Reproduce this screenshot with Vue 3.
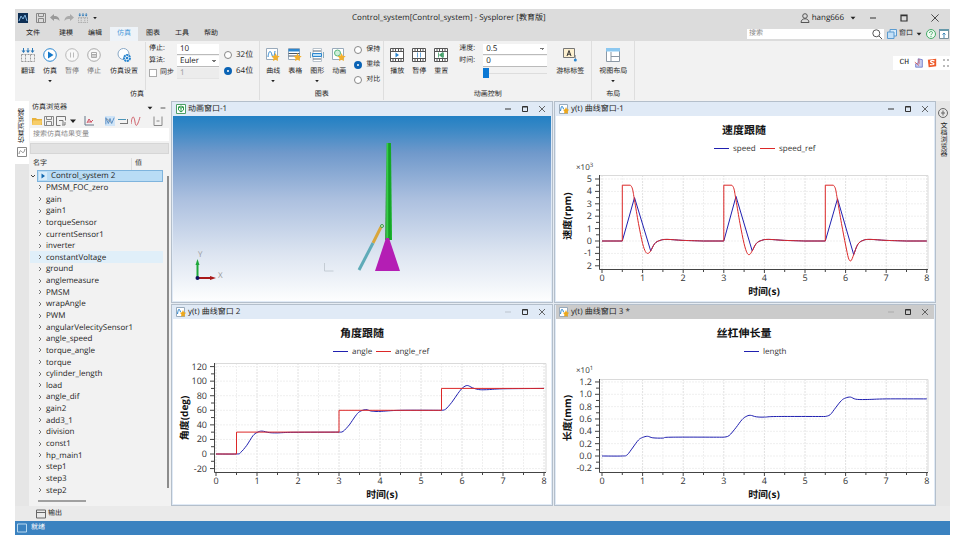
<script setup>
import { ref } from 'vue'

const tabs = ['文件', '建模', '编辑', '仿真', '图表', '工具', '帮助']
const simButtons = [
  { label: '翻译', icon: 'i-translate' },
  { label: '仿真', icon: 'i-play', caret: true },
  { label: '暂停', icon: 'i-pause', dim: true },
  { label: '停止', icon: 'i-stop', dim: true },
  { label: '仿真设置', icon: 'i-config', wide: true },
]
const chartButtons = [
  { label: '曲线', icon: 'i-curve', caret: true },
  { label: '表格', icon: 'i-table' },
  { label: '图形', icon: 'i-shape', caret: true },
  { label: '动画', icon: 'i-anim' },
]
const animButtons = [
  { label: '播放', icon: 'i-film-play' },
  { label: '暂停', icon: 'i-film-pause' },
  { label: '重置', icon: 'i-film-reset' },
]
const tools = ['i-folder', 'i-save', 'i-export', 'i-caret', 'i-axes', 'i-wave', 'i-lines', 'i-redwave', 'i-collapse']
const tree = [
  'PMSM_FOC_zero', 'gain', 'gain1', 'torqueSensor', 'currentSensor1', 'inverter', 'constantVoltage',
  'ground', 'anglemeasure', 'PMSM', 'wrapAngle', 'PWM', 'angularVelecitySensor1', 'angle_speed',
  'torque_angle', 'torque', 'cylinder_length', 'load', 'angle_dif', 'gain2', 'add3_1', 'division',
  'const1', 'hp_main1', 'step1', 'step3', 'step2',
]

const bits = ref('64')
const mode = ref('重绘')
const stopTime = ref('10')
const syncStep = ref('1')
const animTime = ref('0')

const BLUE = '#2020b0'
const RED = '#dc2828'

// Catmull-Rom spline through data points; "line" runs use straight segments.
function toPath(c, runs) {
  const px = ([x, y]) => [c.x0 + x * c.xu, c.y0 - y * c.yu]
  const f = (p) => p.map((v) => v.toFixed(1)).join(' ')
  let d = ''
  runs.forEach((run) => {
    const p = run.pts.map(px)
    d += (d ? 'L' : 'M') + f(p[0])
    for (let i = 1; i < p.length; i++) {
      if (run.line) {
        d += 'L' + f(p[i])
        continue
      }
      const a = p[i - 2] || p[i - 1]
      const b = p[i - 1]
      const e = p[i]
      const g = p[i + 1] || e
      d += 'C' + f([b[0] + (e[0] - a[0]) / 6, b[1] + (e[1] - a[1]) / 6]) + ' '
        + f([e[0] - (g[0] - b[0]) / 6, e[1] - (g[1] - b[1]) / 6]) + ' ' + f(e)
    }
  })
  return d
}

const pulses = [
  { t: 0.5, peak: 3.5, low: -0.8, ref: -1.0 },
  { t: 3, peak: 3.6, low: -0.8, ref: -1.1 },
  { t: 5.5, peak: 3.4, low: -1.1, ref: -1.6 },
]
const tail = (t, low) => [[t + 0.7, low], [t + 0.8, low * 0.25], [t + 0.93, 0.05], [t + 1.1, 0.13], [t + 1.5, 0.05], [t + 2, 0]]
const speed = [{ line: true, pts: [[0, 0]] }]
const speedRef = [{ line: true, pts: [[0, 0]] }]
pulses.forEach(({ t, peak, low, ref: r }) => {
  speed.push({ line: true, pts: [[t, 0], [t + 0.3, peak], [t + 0.7, low]] }, { pts: tail(t, low) })
  speedRef.push({ line: true, pts: [[t, 0], [t, 4.5], [t + 0.2, 4.5]] })
  speedRef.push({ pts: [[t + 0.2, 4.5], [t + 0.25, 4.2], [t + 0.3, 3.3], [t + 0.4, 1.4], [t + 0.5, r * 0.2], [t + 0.57, r * 0.85], [t + 0.63, r], ...tail(t, low)] })
})
speed.push({ line: true, pts: [[8, 0]] })
speedRef.push({ line: true, pts: [[8, 0]] })

const angle = [
  { pts: [[0, 0], [0.5, 0], [0.6, 2], [0.75, 12], [0.9, 25], [1, 29.5], [1.12, 31.5], [1.3, 29.4], [1.5, 29], [1.9, 29.8], [3, 30]] },
  { pts: [[3, 30], [3.1, 31], [3.25, 40], [3.4, 52], [3.5, 58], [3.65, 61], [3.8, 58.8], [4, 58.5], [4.5, 60], [5.5, 60]] },
  { pts: [[5.5, 60], [5.6, 61.5], [5.75, 71], [5.9, 83], [6.02, 91], [6.13, 94], [6.25, 91], [6.4, 88.5], [6.6, 88.3], [7, 89.5], [8, 90]] },
]
const angleRef = [{ line: true, pts: [[0, 0], [0.5, 0], [0.5, 30], [3, 30], [3, 60], [5.5, 60], [5.5, 90], [8, 90]] }]
const length = [
  { pts: [[0, 0], [0.5, 0], [0.62, 0.02], [0.75, 0.13], [0.9, 0.26], [1, 0.3], [1.12, 0.32], [1.25, 0.295], [1.5, 0.29], [1.7, 0.305], [3, 0.305]] },
  { pts: [[3, 0.305], [3.13, 0.33], [3.3, 0.46], [3.45, 0.59], [3.55, 0.64], [3.65, 0.66], [3.8, 0.635], [4, 0.63], [4.3, 0.64], [5.5, 0.64]] },
  { pts: [[5.5, 0.64], [5.62, 0.67], [5.75, 0.78], [5.9, 0.9], [6, 0.94], [6.12, 0.955], [6.25, 0.92], [6.5, 0.915], [7, 0.925], [8, 0.925]] },
]

function build(c) {
  return {
    ...c,
    lines: c.series.map((s) => ({ color: s.color, d: toPath(c, s.runs) })),
    yt: c.labels.map((text, i) => ({ text, y: c.y0 - (c.min + i * c.step) * c.yu })),
    xt: Array.from({ length: 17 }, (_, i) => ({ x: c.x0 + (i * c.xu) / 2, text: i % 2 ? '' : String(i / 2) })),
  }
}

const speedChart = build({
  title: '速度跟随', ylabel: '速度(rpm)', exp: '3', left: 43, right: 372, top: 59, bottom: 153,
  x0: 46, xu: 40.6, y0: 125, yu: 12.4, min: -2, step: 1, labels: ['2', '-1', '0', '1', '2', '3', '4', '5'],
  mid: 188, ymid: 100,
  legend: [{ x: 158, text: 'speed', color: BLUE }, { x: 204, text: 'speed_ref', color: RED }],
  series: [{ color: BLUE, runs: speed }, { color: RED, runs: speedRef }],
})
const angleChart = build({
  title: '角度跟随', ylabel: '角度(deg)', left: 41, right: 373, top: 44, bottom: 153,
  x0: 43, xu: 41, y0: 135, yu: 0.7285, min: -20, step: 20, labels: ['-20', '0', '20', '40', '60', '80', '100', '120'],
  mid: 189, ymid: 99,
  legend: [{ x: 160, text: 'angle', color: BLUE }, { x: 203, text: 'angle_ref', color: RED }],
  series: [{ color: BLUE, runs: angle }, { color: RED, runs: angleRef }],
})
const lengthChart = build({
  title: '丝杠伸长量', ylabel: '长度(mm)', exp: '1', left: 43, right: 372, top: 60, bottom: 153,
  x0: 46, xu: 40.6, y0: 137, yu: 61.7, min: -0.2, step: 0.2, labels: ['-0.2', '0.0', '0.2', '0.4', '0.6', '0.8', '1.0', '1.2'],
  mid: 188, ymid: 99,
  legend: [{ x: 188, text: 'length', color: BLUE }],
  series: [{ color: BLUE, runs: length }],
})
const panes = [
  { name: '动画窗口-1', icon: 'i-scene' },
  { name: 'y(t) 曲线窗口-1', icon: 'i-plot', chart: speedChart },
  { name: 'y(t) 曲线窗口 2', icon: 'i-plot', chart: angleChart, idle: true },
  { name: 'y(t) 曲线窗口 3 *', icon: 'i-plot', chart: lengthChart, gray: true, idle: true },
]
</script>

<template>
  <div class="page">
    <svg class="defs" aria-hidden="true">
      <symbol id="i-caret" viewBox="0 0 10 10"><path d="M2 3.500h6L5 7z" fill="#222" /></symbol>
      <symbol id="i-min" viewBox="0 0 10 10"><path d="M2 5h6" stroke="#333" fill="none" /></symbol>
      <symbol id="i-max" viewBox="0 0 10 10"><path d="M2.500 2.500h5v5h-5zM2.500 3h5" stroke="#333" fill="none" /></symbol>
      <symbol id="i-close" viewBox="0 0 10 10"><path d="M2 2l6 6M8 2l-6 6" stroke="#444" stroke-width=".8" fill="none" /></symbol>
      <symbol id="i-logo" viewBox="0 0 10 10"><path d="M0 0h10v10H0z" fill="#0d2f55" /><path d="M1 8l2-5 2 3 2-4 2 6" stroke="#7fb4e0" fill="none" /></symbol>
      <symbol id="i-save" viewBox="0 0 10 10"><path d="M.5.500h9v9h-9zM2.500.5v3h5v-3M2.500 9.500v-4h5v4" stroke="#888" fill="none" /></symbol>
      <symbol id="i-undo" viewBox="0 0 10 10"><path d="M0 4.500L4 1v2c4 0 5.500 2 5.500 5C8 6 6.500 6 4 6v2z" fill="#999" /></symbol>
      <symbol id="i-redo" viewBox="0 0 10 10"><path d="M10 4.500L6 1v2C2 3 .5 5 .5 8 2 6 3.500 6 6 6v2z" fill="#aaa" /></symbol>
      <symbol id="i-translate" viewBox="0 0 14 14"><path d="M2.500 0v3M7 0v3M11.500 0v3" stroke="#2b78b8" /><path d="M.5 2.500h4l-2 2.500zM5 2.500h4L7 5zM9.500 2.500h4l-2 2.500z" fill="#2b78b8" /><path d="M.5 6.500h13M.5 6.500v7M4.500 6.500v7M9.500 6.500v7M13.500 6.500v7M.5 13.500h13" stroke="#999" stroke-dasharray="2 1" fill="none" /></symbol>
      <symbol id="i-play" viewBox="0 0 14 14"><circle cx="7" cy="7" r="6.300" fill="#fff" stroke="#2b86cf" /><path d="M5 3.500l5.500 3.500L5 10.500z" fill="#1477c8" /></symbol>
      <symbol id="i-pause" viewBox="0 0 14 14"><circle cx="7" cy="7" r="6.300" fill="#f8f8f8" stroke="#b9b9b9" /><path d="M5.500 4.500v5M8.500 4.500v5" stroke="#bbb" /></symbol>
      <symbol id="i-stop" viewBox="0 0 14 14"><circle cx="7" cy="7" r="6.300" fill="#f8f8f8" stroke="#aaa" /><path d="M4.500 4.500h5v5h-5zM5 6.500h4M5 8h4" stroke="#aaa" fill="none" /></symbol>
      <symbol id="i-config" viewBox="0 0 14 14"><circle cx="6.500" cy="6" r="5.500" fill="#fff" stroke="#8aa9c6" /><circle cx="10" cy="10" r="3" fill="#fff" stroke="#2b86cf" stroke-width="2" stroke-dasharray="2 .6" /><circle cx="10" cy="10" r="1.300" fill="#2b86cf" /></symbol>
      <symbol id="i-curve" viewBox="0 0 14 14"><path d="M.5.500h11v11H.5z" fill="#fff" stroke="#9ab" /><path d="M2 9c1-8 3-6 4-2s2 3 3-4" stroke="#2b86cf" fill="none" /><path d="M9.500 5l1.300 2.700 2.900.5-2.200 1.800.5 3-2.500-1.300L7 13l.5-3-2-1.800 2.800-.5z" fill="#f3b02c" /></symbol>
      <symbol id="i-table" viewBox="0 0 14 14"><path d="M.5.500h11v11H.5z" fill="#fff" stroke="#9ab" /><path d="M.5 1h11v2.500H.5z" fill="#2b86cf" /><path d="M.5 5.500h11M.5 8h11" stroke="#456" /><path d="M9.500 5l1.300 2.700 2.900.5-2.200 1.800.5 3-2.500-1.300L7 13l.5-3-2-1.800 2.800-.5z" fill="#f3b02c" /></symbol>
      <symbol id="i-shape" viewBox="0 0 14 14"><path d="M3 .5h8.500v13H3z" fill="#fff" stroke="#b9c3cc" /><path d="M3 3h8M3 11h8" stroke="#567" /><path d="M2.500 5.500h9v3h-9z" fill="#bde0f6" stroke="#2b86cf" /><path d="M.5 4v6M13.500 4v6" stroke="#8ab" /></symbol>
      <symbol id="i-anim" viewBox="0 0 14 14"><path d="M.5.500h11v11H.5z" fill="#fff" stroke="#9ab" /><circle cx="5.500" cy="5" r="3" fill="#cfeeda" stroke="#58b87c" /><path d="M9.500 5l1.300 2.700 2.900.5-2.200 1.800.5 3-2.500-1.300L7 13l.5-3-2-1.800 2.800-.5z" fill="#f3b02c" /></symbol>
      <symbol id="i-film" viewBox="0 0 14 14"><path d="M.5.500h13v13H.5zM.5 3.500h13M.5 10.500h13" fill="#fff" stroke="#555" /><path d="M3 1v2.500M5.500 1v2.500M8.500 1v2.500M11 1v2.500M3 10.500V13M5.500 10.500V13M8.500 10.500V13M11 10.500V13" stroke="#555" /></symbol>
      <symbol id="i-film-play" viewBox="0 0 14 14"><use href="#i-film" /><path d="M5.500 4.500L9 7 5.500 9.500z" fill="#2b86cf" /></symbol>
      <symbol id="i-film-pause" viewBox="0 0 14 14"><use href="#i-film" /><path d="M5.500 4.500v5M8.500 4.500v5" stroke="#69a5d6" /></symbol>
      <symbol id="i-film-reset" viewBox="0 0 14 14"><use href="#i-film" /><path d="M4.500 4.500v5M9.500 4.500v5M8.500 4.500L5.500 7l3 2.500z" stroke="#3d9a63" fill="#3d9a63" stroke-width=".8" /></symbol>
      <symbol id="i-cursor" viewBox="0 0 14 14"><path d="M.5.500h11v9H.5z" fill="#fdf0cf" stroke="#777" /><path d="M4 8l2-5.500L8 8M4.700 6.200h2.600" stroke="#333" fill="none" /><path d="M12.500 7v5" stroke="#aaa" /><circle cx="12.300" cy="12" r="1.500" fill="#2b86cf" /></symbol>
      <symbol id="i-layout" viewBox="0 0 14 14"><path d="M.5.500h13v13H.5z" fill="#fff" stroke="#8b98a5" /><path d="M0 0h14v3.500H0z" fill="#8cc8f0" /><path d="M5 4v9.500M5 8.500h8.500" stroke="#8b98a5" /></symbol>
      <symbol id="i-folder" viewBox="0 0 10 10"><path d="M0 2h4l1 1h5v6H0z" fill="#e8b23c" /><path d="M1 4.500h9L9 9H0z" fill="#f7cd69" /></symbol>
      <symbol id="i-export" viewBox="0 0 10 10"><path d="M.5.500h9v4M.5.500v9h4M3 4.500h4v4M6 9h3V6" stroke="#777" fill="none" /></symbol>
      <symbol id="i-axes" viewBox="0 0 10 10"><path d="M1 0v9h9" stroke="#678" fill="none" /><path d="M3 7l2-4 2 3 2-2M4 6h4" stroke="#cf5063" fill="none" /></symbol>
      <symbol id="i-wave" viewBox="0 0 12 10"><path d="M1 9V1l3 7 2-6 2 6 3-7" stroke="#4d84bd" fill="none" /><path d="M2 4c2-4 3 4 5 2" stroke="#888" fill="none" /></symbol>
      <symbol id="i-lines" viewBox="0 0 10 10"><path d="M0 3.500h8" stroke="#4b95b8" /><path d="M2 7.500h8M9.500 3v4" stroke="#777" /></symbol>
      <symbol id="i-redwave" viewBox="0 0 10 10"><path d="M0 8c1-9 3-9 4-2s3 2 5-5" stroke="#d0606a" fill="none" /></symbol>
      <symbol id="i-collapse" viewBox="0 0 10 10"><path d="M9 9.500H1v-9M9 9.500v-9M3.500 5h3" stroke="#888" fill="none" /></symbol>
      <symbol id="i-scene" viewBox="0 0 10 10"><path d="M.5.500h9v9h-9z" fill="#fff" stroke="#4d9e68" /><path d="M5 2l2.500 1v3L5 8 2.500 6V3zM5 4v4M2.500 3L5 4l2.500-1" stroke="#2f9b4d" fill="none" /></symbol>
      <symbol id="i-plot" viewBox="0 0 10 10"><path d="M.5.500h8v9h-8z" fill="#fff" stroke="#9ab" /><path d="M1.500 7c1-7 2-5 3-2" stroke="#2b86cf" fill="none" /><path d="M7 3l1 2.200 2 .6-1.400 1.600.4 2.300L7 9l-2 .7.400-2.300L4 5.800l2-.6z" fill="#eda81c" /></symbol>
      <symbol id="i-panel" viewBox="0 0 10 10"><path d="M.5 1h9v8h-9zM.5 3.500h9" stroke="#666" fill="none" /></symbol>
      <symbol id="i-search" viewBox="0 0 10 10"><circle cx="4.300" cy="4.300" r="3.500" stroke="#555" fill="none" /><path d="M7 7l3 3" stroke="#555" /></symbol>
      <symbol id="i-user" viewBox="0 0 10 10"><circle cx="5" cy="3" r="2.300" stroke="#555" fill="none" /><path d="M1 9.500c0-5 8-5 8 0z" stroke="#555" fill="none" /></symbol>
      <symbol id="i-windows" viewBox="0 0 10 10"><path d="M3 .5h6.500v6.500H3z" fill="#d7ebfa" stroke="#5b9bd0" /><path d="M.5 3h6.500v6.500H.5z" fill="#c3e0f7" stroke="#5b9bd0" /></symbol>
      <symbol id="i-help" viewBox="0 0 10 10"><circle cx="5" cy="5" r="4.500" fill="#eefaf1" stroke="#45ab68" /><path d="M3.500 4c0-2.200 3-2 3-.3C6.500 5 5 4.800 5 6.200M5 7v1" stroke="#45ab68" fill="none" /></symbol>
      <symbol id="i-ribbon" viewBox="0 0 10 10"><path d="M.5.500h9v9h-9z" fill="#fff" stroke="#78909c" /><path d="M0 0h10v2H0z" fill="#69a" /><path d="M5 9V4M3.500 5.500L5 4l1.500 1.500" stroke="#3b86b6" fill="none" /></symbol>
    </svg>

    <div class="app">
      <header class="head">
        <div class="titlebar">
          <div class="quick">
            <svg class="ic10"><use href="#i-logo" /></svg>
            <button class="flat" aria-label="保存"><svg class="ic10"><use href="#i-save" /></svg></button>
            <button class="flat" aria-label="撤销"><svg class="ic10"><use href="#i-undo" /></svg></button>
            <button class="flat" aria-label="重做"><svg class="ic10"><use href="#i-redo" /></svg></button>
            <button class="flat" aria-label="翻译"><svg class="ic10"><use href="#i-translate" /></svg></button>
            <button class="flat" aria-label="更多"><svg class="ic6"><use href="#i-caret" /></svg></button>
          </div>
          <h1 class="title">Control_system[Control_system] - Sysplorer [教育版]</h1>
          <div class="account">
            <button class="flat user"><svg class="ic10"><use href="#i-user" /></svg>hang666<svg class="ic8 user-caret"><use href="#i-caret" /></svg></button>
            <button class="flat sys" aria-label="最小化"><svg class="ic10"><use href="#i-min" /></svg></button>
            <button class="flat sys" aria-label="还原"><svg class="ic12"><use href="#i-max" /></svg></button>
            <button class="flat sys" aria-label="关闭"><svg class="ic12"><use href="#i-close" /></svg></button>
          </div>
        </div>
        <div class="menubar">
          <nav class="tabs">
            <button v-for="t in tabs" :key="t" class="tab" :class="{ active: t === '仿真' }">{{ t }}</button>
          </nav>
          <div class="menu-right">
            <label class="search"><input type="search" placeholder="搜索" aria-label="搜索" /><svg class="ic10"><use href="#i-search" /></svg></label>
            <button class="flat wins"><svg class="ic10"><use href="#i-windows" /></svg>窗口<svg class="ic8"><use href="#i-caret" /></svg></button>
            <button class="flat" aria-label="帮助"><svg class="ic10"><use href="#i-help" /></svg></button>
            <button class="flat" aria-label="折叠功能区"><svg class="ic10"><use href="#i-ribbon" /></svg></button>
          </div>
        </div>
      </header>

      <section class="ribbon">
        <div class="group">
          <div class="items">
            <button v-for="b in simButtons" :key="b.label" class="tool" :class="{ wide: b.wide, dim: b.dim }">
              <svg class="ic14"><use :href="'#' + b.icon" /></svg><span>{{ b.label }}</span>
              <svg v-if="b.caret" class="ic6"><use href="#i-caret" /></svg>
            </button>
            <div class="form sim-form">
              <label for="stop">停止:</label><input id="stop" v-model="stopTime" class="field" />
              <label for="algo">算法:</label><select id="algo" class="field"><option>Euler</option></select>
              <label class="check"><input type="checkbox" />同步</label><input v-model="syncStep" class="field off" aria-label="同步步长" disabled />
            </div>
            <div class="radios two">
              <label><input v-model="bits" type="radio" value="32" />32位</label>
              <label><input v-model="bits" type="radio" value="64" />64位</label>
            </div>
          </div>
          <div class="caption">仿真</div>
        </div>
        <div class="group">
          <div class="items">
            <button v-for="b in chartButtons" :key="b.label" class="tool">
              <svg class="ic14"><use :href="'#' + b.icon" /></svg><span>{{ b.label }}</span>
              <svg v-if="b.caret" class="ic6"><use href="#i-caret" /></svg>
            </button>
            <div class="radios three">
              <label v-for="m in ['保持', '重绘', '对比']" :key="m"><input v-model="mode" type="radio" :value="m" />{{ m }}</label>
            </div>
          </div>
          <div class="caption">图表</div>
        </div>
        <div class="group">
          <div class="items">
            <button v-for="b in animButtons" :key="b.label" class="tool">
              <svg class="ic14"><use :href="'#' + b.icon" /></svg><span>{{ b.label }}</span>
            </button>
            <div class="form anim-form">
              <label for="speed">速度:</label><select id="speed" class="field"><option>0.5</option></select>
              <label for="time">时间:</label><input id="time" v-model="animTime" class="field" />
              <input class="slider" type="range" min="0" max="10" value="0" aria-label="进度" />
            </div>
            <button class="tool wide"><svg class="ic14"><use href="#i-cursor" /></svg><span>游标标签</span></button>
          </div>
          <div class="caption">动画控制</div>
        </div>
        <div class="group">
          <div class="items">
            <button class="tool wide"><svg class="ic14"><use href="#i-layout" /></svg><span>视图布局</span><svg class="ic6"><use href="#i-caret" /></svg></button>
          </div>
          <div class="caption">布局</div>
        </div>
        <div class="ime">
          <span>CH</span>
          <svg class="ic10" viewBox="0 0 12 12"><path d="M5 1l5 1v9H2V7l3-1z" fill="#c6cdf0" stroke="#6b78c8" /><path d="M1 5l5 4M6 1v6" stroke="#d9534f" /></svg>
          <svg class="ic10" viewBox="0 0 12 12"><path d="M1 2l10-1v9L2 11z" fill="#ee5a2a" /><path d="M9 3.500c-5-1.500-6 1-3 2s4 3-2.500 2.500" stroke="#fff" stroke-width="1.500" fill="none" /></svg>
          <svg class="ic10" viewBox="0 0 10 10"><path d="M3 2h2M7 2h2M3 8h2M7 8h2" stroke="#777" /></svg>
        </div>
      </section>

      <main class="body">
        <aside class="rail"><button class="rail-tab"><span>仿真浏览器</span><svg class="ic10" viewBox="0 0 10 10"><path d="M.5.500h9v9h-9zM2 7c1-5 2-3 3-2s2 1 3-3" stroke="#888" fill="none" /></svg></button></aside>
        <section class="browser">
          <div class="browser-title"><span>仿真浏览器</span><svg class="ic8"><use href="#i-caret" /></svg><svg class="ic8"><use href="#i-min" /></svg></div>
          <div class="toolbar">
            <button v-for="t in tools" :key="t" class="flat" :class="t" :aria-label="t.slice(2)"><svg class="ic10"><use :href="'#' + t" /></svg></button>
          </div>
          <input class="filter" type="search" placeholder="搜索仿真结果变量" aria-label="搜索仿真结果变量" />
          <div class="blank"></div>
          <div class="cols"><span>名字</span><span>值</span></div>
          <div class="tree-wrap">
            <ul class="tree">
              <li class="root"><svg class="ic6" viewBox="0 0 6 6"><path d="M1 2l2 2 2-2" stroke="#444" fill="none" /></svg><div class="root-row"><svg class="ic8" viewBox="0 0 8 8"><path d="M0 0h8v8H0z" fill="#d8ecfa" /><path d="M2.500 1.500L6 4 2.500 6.500z" fill="#1268b0" /></svg>Control_system 2</div></li>
              <li v-for="n in tree" :key="n" :class="{ hover: n === 'constantVoltage' }"><svg class="ic6" viewBox="0 0 6 6"><path d="M2 1l2 2-2 2" stroke="#777" fill="none" /></svg>{{ n }}</li>
            </ul>
            <div class="vbar"></div>
          </div>
          <div class="hbar"></div>
        </section>

        <section class="mdi">
          <article v-for="p in panes" :key="p.name" class="win" :class="{ gray: p.gray }">
            <header class="win-title">
              <svg class="ic10"><use :href="'#' + p.icon" /></svg><h2>{{ p.name }}</h2>
              <button class="flat" :class="{ faint: p.idle }" aria-label="最小化"><svg class="ic10"><use href="#i-min" /></svg></button>
              <button class="flat" aria-label="最大化"><svg class="ic10"><use href="#i-max" /></svg></button>
              <button class="flat" aria-label="关闭"><svg class="ic10"><use href="#i-close" /></svg></button>
            </header>
            <svg v-if="p.chart" class="canvas" viewBox="0 0 378 185">
              <text class="c-title" :x="p.chart.mid" y="18">{{ p.chart.title }}</text>
              <g v-for="l in p.chart.legend" :key="l.text">
                <path :d="`M${l.x} 32.500h15`" :stroke="l.color" />
                <text class="c-legend" :x="l.x + 19" y="35">{{ l.text }}</text>
              </g>
              <text v-if="p.chart.exp" class="c-exp" x="20" y="54">×10<tspan class="sup" dy="-3">{{ p.chart.exp }}</tspan></text>
              <g class="grid">
                <path v-for="t in p.chart.xt" :key="t.x" :class="{ major: t.text }" :d="`M${t.x} ${p.chart.top}V${p.chart.bottom}`" />
                <path v-for="t in p.chart.yt" :key="t.y" :d="`M${p.chart.left} ${t.y}H${p.chart.right}`" />
              </g>
              <path class="frame" :d="`M${p.chart.left} ${p.chart.top}.5H${p.chart.right}V${p.chart.bottom}`" />
              <path class="axis" :d="`M${p.chart.left}.5 ${p.chart.top}V${p.chart.bottom}.5H${p.chart.right}`" />
              <g class="ticks">
                <path v-for="t in p.chart.xt" :key="t.x" :d="`M${t.x} ${p.chart.bottom}v${t.text ? 4 : 3}`" />
                <path v-for="t in p.chart.yt" :key="t.y" :d="`M${p.chart.left} ${t.y}h-4`" />
                <path v-for="t in p.chart.yt.slice(1)" :key="'m' + t.y" :d="`M${p.chart.left} ${t.y + (p.chart.yt[0].y - p.chart.yt[1].y) / 2}h-3`" />
              </g>
              <path v-for="l in p.chart.lines" :key="l.color" class="curve" :d="l.d" :stroke="l.color" />
              <template v-for="t in p.chart.xt" :key="'x' + t.x"><text v-if="t.text" class="c-tick center" :x="t.x" y="165">{{ t.text }}</text></template>
              <text v-for="t in p.chart.yt" :key="'y' + t.y" class="c-tick end" :x="p.chart.left - 7" :y="t.y + 3">{{ t.text }}</text>
              <text class="c-axis" :x="p.chart.mid + 20" y="179">时间(s)</text>
              <text class="c-axis" :transform="`translate(15 ${p.chart.ymid}) rotate(-90)`">{{ p.chart.ylabel }}</text>
            </svg>
            <svg v-else class="canvas" viewBox="0 0 378 185" preserveAspectRatio="none">
              <defs>
                <linearGradient id="sky" x1="0" y1="0" x2="0" y2="1">
                  <stop offset="0" stop-color="#2280c4" /><stop offset=".06" stop-color="#3687c5" /><stop offset=".2" stop-color="#7099cb" />
                  <stop offset=".45" stop-color="#acc0df" /><stop offset=".75" stop-color="#dde5f1" /><stop offset="1" stop-color="#fdfefe" />
                </linearGradient>
                <linearGradient id="mast"><stop offset="0" stop-color="#3a8c48" /><stop offset=".35" stop-color="#35d048" /><stop offset=".55" stop-color="#159a25" /><stop offset="1" stop-color="#16b52a" /></linearGradient>
              </defs>
              <path d="M0 0h378v185H0z" fill="url(#sky)" />
              <path d="M213.500 27h4.500l1 97h-7z" fill="url(#mast)" />
              <path d="M208 111l-8 16" stroke="#d9a63c" stroke-width="3" />
              <path d="M200 127l-14 27" stroke="#5fabb8" stroke-width="3" />
              <circle cx="209" cy="110" r="1.500" fill="#d8f0c8" stroke="#3d9a4a" />
              <path d="M213 122h3l11 33h-25z" fill="#b41eb4" />
              <path d="M151.500 147v8h9" stroke="#c4ccd4" fill="none" />
              <path d="M24.500 161v-13" stroke="#1da83a" stroke-width="2" /><path d="M22.500 149l2-6 2 6z" fill="#1da83a" />
              <path d="M24 162h14" stroke="#a81818" stroke-width="2" /><path d="M37 160l6 2-6 2z" fill="#a81818" />
              <circle cx="24.500" cy="162" r="2" fill="#101060" />
              <text class="c-dir" x="25" y="141">Y</text><text class="c-dir" x="45" y="162">X</text>
            </svg>
          </article>
        </section>
        <aside class="rail right"><button class="rail-tab doc"><svg class="ic10" viewBox="0 0 10 10"><circle cx="5" cy="5" r="4.500" stroke="#666" fill="none" /><path d="M5 2.500v5M3 5h4" stroke="#666" /></svg><span>文档浏览器</span></button></aside>
      </main>

      <div class="output"><button class="flat"><svg class="ic10"><use href="#i-panel" /></svg>输出</button></div>
      <footer class="status"><svg class="ic10" viewBox="0 0 10 10"><path d="M.5 1h9v8h-9z" stroke="#b8d8f0" fill="none" /></svg>就绪</footer>
    </div>
  </div>
</template>

<style>
body { margin: 0; background: #fff; }
</style>

<style scoped>
.page {
  box-sizing: border-box; min-height: 100vh; padding: 9px 8px 11px 15px; display: flex; flex-direction: column;
  font-family: "Open Sans", "Noto Sans CJK SC", sans-serif; font-size: 8px; line-height: 12px; color: #222;
  text-rendering: geometricPrecision;
}
.page *, .page *::before { box-sizing: border-box; }
.defs { position: absolute; width: 0; height: 0; }
.app { flex: 1; display: flex; flex-direction: column; background: #f2f2f2; }
button, input, select { font: inherit; color: inherit; margin: 0; text-rendering: inherit; }
button { padding: 0; border: 0; background: none; }
svg { display: block; flex: none; }
.ic6 { width: 6px; height: 6px; }
.ic8 { width: 8px; height: 8px; }
.ic10 { width: 10px; height: 10px; }
.ic12 { width: 12px; height: 12px; }
.ic14 { width: 14px; height: 14px; }
.flat { display: flex; align-items: center; }

.head { background: #dcdcdc; }
.titlebar { display: grid; grid-template-columns: 5fr auto 6fr; align-items: center; height: 18px; }
.quick { display: flex; align-items: center; gap: 4px; padding-left: 3px; }
.quick .flat:nth-child(2) { margin-left: 4px; }
.title { margin: 0; font-size: 8px; font-weight: 400; white-space: nowrap; }
.account { display: flex; justify-content: flex-end; align-items: center; }
.user { gap: 2px; }
.user-caret { margin-left: 3px; }
.sys { width: 31px; justify-content: center; }
.menubar { display: flex; justify-content: space-between; height: 14px; font-size: 7px; }
.tabs { display: flex; padding-left: 4px; gap: 1px; }
.tab { width: 28px; }
.tab:first-child { margin-right: 4px; }
.tab.active { background: #eef3f8; color: #4a9ad8; }
.menu-right { display: flex; align-items: center; gap: 3px; padding-right: 1px; }
.search { display: flex; align-items: center; width: 137px; height: 10px; padding-right: 2px; background: #fff; }
.search input { flex: 1; min-width: 0; height: 10px; padding: 0 2px; border: 0; outline: 0; background: none; }
.wins { gap: 2px; }

.ribbon { display: flex; align-items: flex-start; height: 60px; background: #f2f2f2; font-size: 7px; }
.group { display: flex; flex-direction: column; height: 59px; padding: 0 2px; border-right: 1px solid #dedede; }
.items { display: flex; height: 49px; padding-top: 1px; }
.caption { text-align: center; line-height: 10px; }
.tool { display: flex; flex-direction: column; align-items: center; width: 22px; padding-top: 6px; }
.tool span { margin-top: 4px; line-height: 12px; white-space: nowrap; }
.tool.wide { width: 38px; }
.tool.dim { color: #777; }
.form { display: grid; grid-auto-rows: 12px; align-content: start; align-items: center; padding-top: 1px; }
.sim-form { grid-template-columns: 28px 42px; margin-left: 2px; padding-left: 3px; border-left: 1px solid #dedede; }
.anim-form { grid-template-columns: 24px 64px; margin: 0 4px 0 7px; }
.field { width: 100%; min-width: 0; height: 11px; padding: 0 3px; border: 0; border-bottom: 1px solid #bbb; border-radius: 0; background-color: #fff; font-size: 8px; line-height: 10px; }
select.field { appearance: none; background-image: linear-gradient(45deg, transparent 50%, #777 50%), linear-gradient(-45deg, transparent 50%, #777 50%); background-size: 2px 2px; background-position: right 5px center, right 3px center; background-repeat: no-repeat; }
.field.off { background: #ececec; color: #999; border-color: #e4e4e4; }
.check { display: flex; align-items: center; gap: 3px; white-space: nowrap; }
.check input { appearance: none; width: 8px; height: 8px; border: 1px solid #aaa; background: #fff; }
.slider { appearance: none; grid-column: 2; width: 100%; height: 11px; background: linear-gradient(#ddd, #ddd) center / 100% 1px no-repeat; }
.slider::-webkit-slider-thumb { appearance: none; width: 6px; height: 10px; background: #0b78d4; }
.radios { display: flex; flex-direction: column; font-size: 8px; }
.radios label { display: flex; align-items: center; gap: 4px; height: 15px; white-space: nowrap; }
.radios input { appearance: none; width: 8px; height: 8px; border: 1px solid #888; border-radius: 50%; background: #fff; }
.radios input:checked { border: 3px solid #0a63b5; }
.two { padding: 5px 4px 0 5px; gap: 1px; }
.three { padding: 0 1px 0 4px; font-size: 7px; }
.ime { display: flex; align-items: center; gap: 3px; margin: 15px 0 0 auto; height: 14px; padding-left: 6px; background: #fff; font-family: "Liberation Mono", monospace; font-size: 8px; }
.ime span { margin-right: 2px; }

.body { flex: 1; display: flex; min-height: 0; }
.rail { width: 14px; background: #e6e6e6; font-size: 7px; }
.rail-tab { display: flex; flex-direction: column; align-items: center; gap: 4px; width: 14px; height: 63px; padding-top: 7px; background: #fff; }
.rail-tab span { writing-mode: vertical-rl; transform: rotate(180deg); line-height: 12px; }
.rail-tab.doc { background: none; }
.rail-tab.doc span { transform: none; }
.browser { display: flex; flex-direction: column; width: 142px; padding: 1px 2px 0 1px; }
.browser-title { display: flex; align-items: center; gap: 5px; height: 12px; padding: 0 2px; font-size: 7px; }
.browser-title span { flex: 1; }
.toolbar { display: flex; align-items: center; height: 14px; padding: 0 2px; gap: 2px; }
.toolbar .i-axes { margin-left: 4px; }
.toolbar .i-wave { margin-left: 9px; background: #cfe4f7; }
.toolbar .i-lines, .toolbar .i-redwave { margin-left: 1px; }
.toolbar .i-collapse { margin-left: 10px; }
.filter { height: 13px; padding: 0 3px; border: 0; background: #fff; font-size: 7px; }
.filter::placeholder, .search input::placeholder { color: #888; }
.blank { height: 11px; margin-top: 2px; background: #e2e2e2; border: 1px solid #d6d6d6; }
.cols { display: grid; grid-template-columns: 98px 1fr; height: 16px; padding: 4px 3px 0; font-size: 7px; }
.cols span + span { padding-left: 3px; border-left: 1px solid #ddd; }
.tree-wrap { display: flex; flex: 1; min-height: 0; gap: 4px; }
.tree { flex: 1; display: flex; flex-direction: column; margin: 0; padding: 0; list-style: none; }
.tree li { flex: 1; display: flex; align-items: center; gap: 3px; min-height: 0; padding-left: 7px; line-height: 11px; white-space: nowrap; }
.tree li.root { gap: 1px; padding-left: 0; }
.root-row { flex: 1; display: flex; align-items: center; gap: 4px; height: 12px; padding-left: 1px; background: #b9dcf5; border: 1px solid #7fb4dd; }
.tree li.hover { background: #e0eff9; }
.vbar { width: 2px; margin: 6px 0 8px; background: #8c8c8c; }
.hbar { width: 48px; height: 2px; margin: 4px 0 4px 8px; background: #a0a0a0; }

.mdi { flex: 1; display: grid; grid-template: 1fr 1fr / 1fr 1fr; gap: 1px; min-width: 0; background: #e6ecf3; }
.win { display: flex; flex-direction: column; min-width: 0; min-height: 0; padding: 0 1px 1px; border: 1px solid #b4bfcb; background: #e0eaf6; }
.win.gray .win-title { background: #cbcbcb; }
.win-title { display: flex; align-items: center; height: 14px; padding: 0 4px 0 3px; gap: 7px; }
.win-title h2 { flex: 1; margin: 0 0 0 -5px; font-size: 8px; font-weight: 400; }
.faint { opacity: .2; }
.canvas { flex: 1; width: 100%; min-height: 0; background: #fff; }
.canvas path { vector-effect: non-scaling-stroke; }
.c-title { font-size: 11px; font-weight: 700; text-anchor: middle; fill: #111; }
.c-legend { font-size: 8px; fill: #333; }
.c-tick { font-size: 9px; fill: #333; }
.c-exp { font-size: 8px; fill: #333; }
.sup { font-size: 6px; }
.center { text-anchor: middle; }
.end { text-anchor: end; }
.c-axis { font-size: 10px; font-weight: 700; text-anchor: middle; fill: #111; }
.c-dir { font-size: 8px; fill: #999; }
.grid path { stroke: #efefef; stroke-dasharray: 2 1; }
.grid .major { stroke: #e0e0e0; }
.frame { fill: none; stroke: #dadada; }
.axis { fill: none; stroke: #444; }
.ticks path { stroke: #444; }
.curve { fill: none; stroke-width: 1; }

.output { display: flex; height: 15px; padding-left: 21px; background: #eaeaea; font-size: 7px; }
.output .flat { gap: 2px; }
.status { display: flex; align-items: center; gap: 4px; height: 14px; padding-left: 2px; background: #3b82c0; color: #fff; font-size: 7px; }
</style>
